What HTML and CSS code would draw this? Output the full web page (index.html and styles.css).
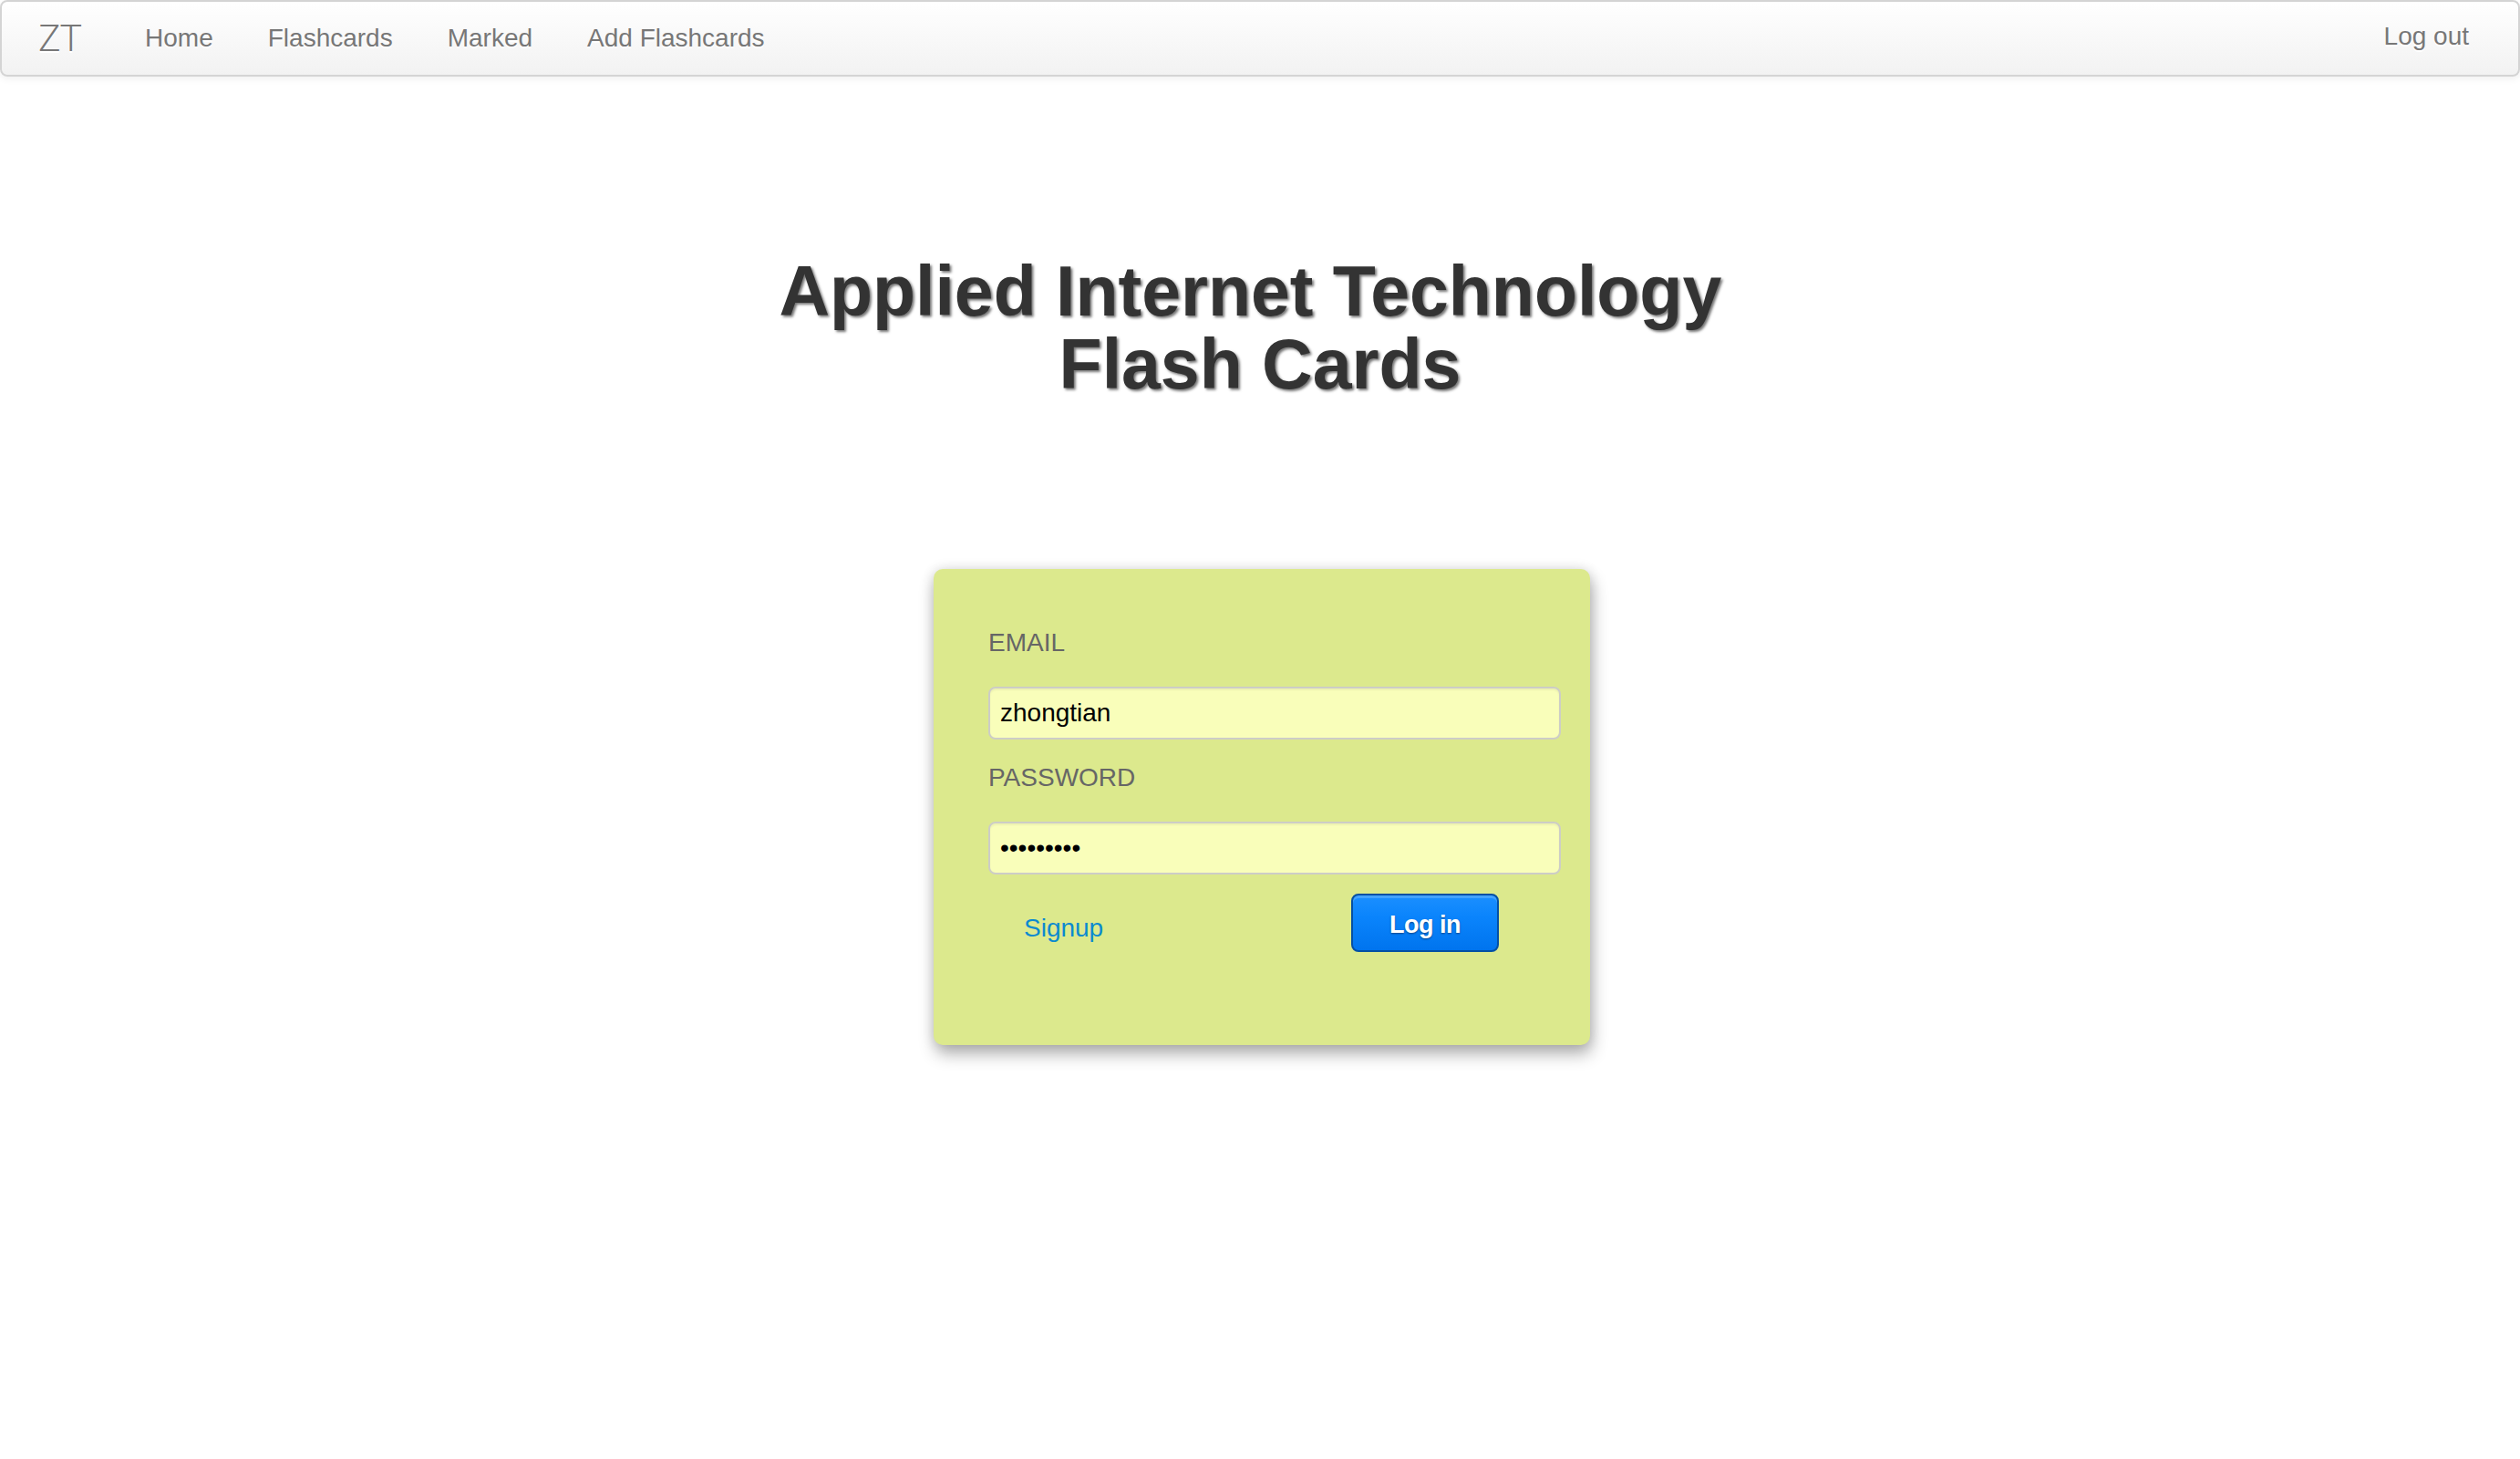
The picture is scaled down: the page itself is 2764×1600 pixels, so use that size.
FILE: index.html
```html
<!DOCTYPE html>
<html lang="en">
<head>
<meta charset="utf-8">
<title>Applied Internet Technology Flash Cards</title>
<link rel="stylesheet" href="styles.css">
</head>
<body>
<nav class="navbar">
  <a class="brand" href="#">ZT</a>
  <ul class="nav">
    <li><a href="#">Home</a></li>
    <li><a href="#">Flashcards</a></li>
    <li><a href="#">Marked</a></li>
    <li><a href="#">Add Flashcards</a></li>
  </ul>
  <ul class="nav nav-right">
    <li><a class="logout" href="#">Log out</a></li>
  </ul>
</nav>
<main class="page">
  <h1 class="title">Applied Internet Technology&nbsp;<br>Flash Cards</h1>
  <form class="login-card" onsubmit="return false">
    <label class="field-label" for="email">EMAIL</label>
    <input class="field-input" id="email" type="text" value="zhongtian">
    <label class="field-label" for="password">PASSWORD</label>
    <input class="field-input" id="password" type="password" value="123456789">
    <div class="actions">
      <a class="signup" href="#">Signup</a>
      <button class="btn-login" type="submit">Log in</button>
    </div>
  </form>
</main>
</body>
</html>
```

FILE: styles.css
```css
* { box-sizing: border-box; }

html, body {
  margin: 0;
  padding: 0;
  background: #ffffff;
}

body {
  font-family: "Liberation Sans", Arial, sans-serif;
  font-size: 28px;
  line-height: 40px;
  color: #333333;
}

/* ---------- navbar ---------- */
.navbar {
  display: flex;
  align-items: flex-start;
  height: 84px;
  padding-right: 24px;
  border: 2px solid #d4d4d4;
  border-radius: 8px;
  background: linear-gradient(to bottom, #ffffff 0%, #f2f2f2 100%);
  box-shadow: 0 2px 8px rgba(0, 0, 0, 0.07);
}

.brand {
  display: block;
  padding: 20px 40px 20px 40px;
  font-family: "Roboto", "Liberation Sans", sans-serif;
  font-weight: 300;
  font-size: 41px;
  line-height: 40px;
  letter-spacing: -1px;
  color: #777777;
  text-decoration: none;
  text-shadow: 0 2px 0 #ffffff;
}

.nav {
  display: flex;
  margin: 0;
  padding: 0;
  list-style: none;
}

.nav a {
  display: block;
  padding: 20px 30px;
  font-size: 28px;
  line-height: 40px;
  color: #777777;
  text-decoration: none;
  text-shadow: 0 2px 0 #ffffff;
}

.nav-right {
  margin-left: auto;
}

.nav a.logout {
  padding-top: 18px;
  padding-bottom: 22px;
}

/* ---------- page ---------- */
.page {
  display: flex;
  flex-direction: column;
  align-items: center;
  padding-bottom: 60px;
}

.title {
  margin: 195px 0 0;
  font-size: 77px;
  line-height: 80px;
  font-weight: bold;
  text-align: center;
  color: #333333;
  text-shadow: 2px 2px 3px rgba(0, 0, 0, 0.55);
}

/* ---------- login card ---------- */
.login-card {
  width: 720px;
  margin: 185px 0 0 4px;
  padding: 61px 32px 102px 60px;
  background: #dce98d;
  border-radius: 10px;
  box-shadow: 2px 10px 18px rgba(0, 0, 0, 0.3), 0 0 14px rgba(0, 0, 0, 0.12);
}

.field-label {
  display: block;
  font-size: 28px;
  line-height: 40px;
  color: #666666;
}

.field-input {
  display: block;
  width: 100%;
  height: 58px;
  margin: 28px 0 22px;
  padding: 0 11px;
  border: 2px solid #cdcdc6;
  border-radius: 8px;
  background: #f9feba;
  font-family: "Liberation Sans", Arial, sans-serif;
  font-size: 28px;
  color: #000000;
  box-shadow: inset 0 2px 2px rgba(0, 0, 0, 0.05);
  outline: none;
}

#password {
  margin-bottom: 21px;
}

.actions {
  display: flex;
  align-items: flex-start;
}

.signup {
  margin: 18px 0 0 39px;
  font-size: 28px;
  line-height: 40px;
  color: #0a8ad0;
  text-decoration: none;
}

.btn-login {
  margin: 0 68px 0 auto;
  width: 162px;
  height: 64px;
  padding: 12px 0 8px;
  border: 2px solid #0450a4;
  border-radius: 8px;
  background: linear-gradient(to bottom, #1b8fff 0%, #0a84fc 40%, #0074ee 100%);
  box-shadow: inset 0 3px 0 rgba(255, 255, 255, 0.18);
  font-family: "Liberation Sans", Arial, sans-serif;
  font-weight: bold;
  font-size: 27px;
  line-height: 40px;
  letter-spacing: -0.5px;
  color: #ffffff;
  text-shadow: 0 1px 2px rgba(0, 0, 0, 0.45);
  cursor: pointer;
}
```
